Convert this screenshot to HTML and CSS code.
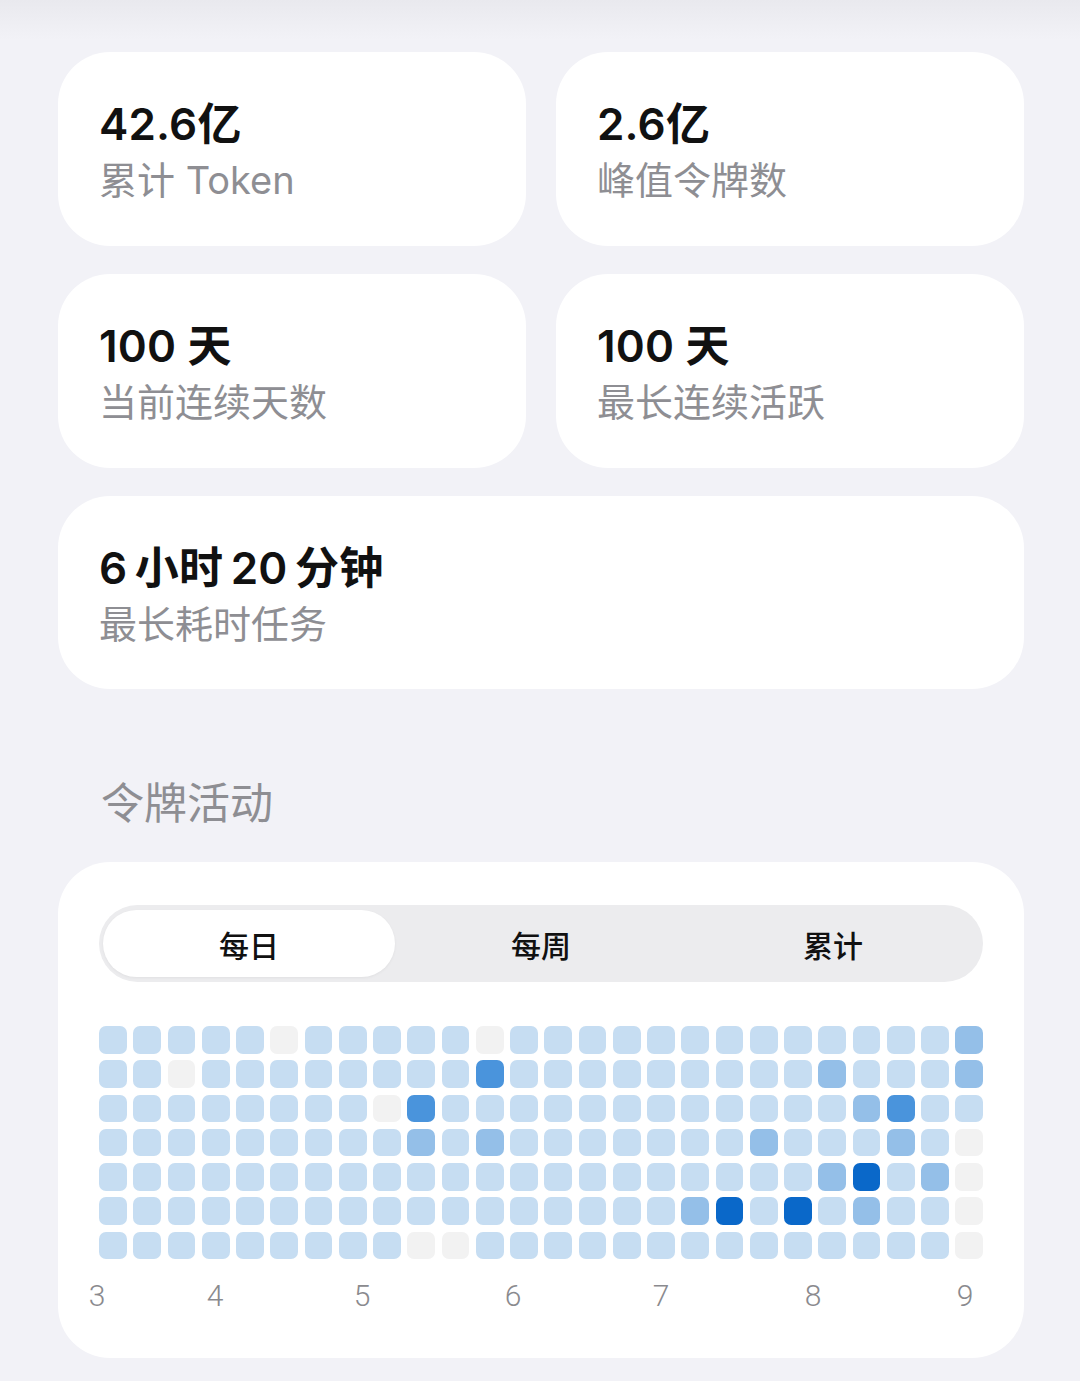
FILE: index.html
```html
<!DOCTYPE html>
<html lang="zh-CN">
<head>
<meta charset="utf-8">
<title>令牌统计</title>
<link rel="stylesheet" href="styles.css">
</head>
<body>
<div class="page">
  <div class="stats">
    <div class="card"><div class="value">42.6亿</div><div class="label">累计 Token</div></div>
    <div class="card"><div class="value">2.6亿</div><div class="label">峰值令牌数</div></div>
    <div class="card"><div class="value">100 天</div><div class="label">当前连续天数</div></div>
    <div class="card"><div class="value">100 天</div><div class="label">最长连续活跃</div></div>
    <div class="card wide"><div class="value">6&#8201;小时&#8201;20&#8201;分钟</div><div class="label">最长耗时任务</div></div>
  </div>

  <h2 class="section-title">令牌活动</h2>

  <div class="activity">
    <div class="segmented">
      <div class="seg active">每日</div>
      <div class="seg">每周</div>
      <div class="seg">累计</div>
    </div>

    <div class="heatmap">
      <span class="c"></span><span class="c"></span><span class="c"></span><span class="c"></span><span class="c"></span><span class="e"></span><span class="c"></span><span class="c"></span><span class="c"></span><span class="c"></span><span class="c"></span><span class="e"></span><span class="c"></span><span class="c"></span><span class="c"></span><span class="c"></span><span class="c"></span><span class="c"></span><span class="c"></span><span class="c"></span><span class="c"></span><span class="c"></span><span class="c"></span><span class="c"></span><span class="c"></span><span class="m"></span>
      <span class="c"></span><span class="c"></span><span class="e"></span><span class="c"></span><span class="c"></span><span class="c"></span><span class="c"></span><span class="c"></span><span class="c"></span><span class="c"></span><span class="c"></span><span class="d"></span><span class="c"></span><span class="c"></span><span class="c"></span><span class="c"></span><span class="c"></span><span class="c"></span><span class="c"></span><span class="c"></span><span class="c"></span><span class="m"></span><span class="c"></span><span class="c"></span><span class="c"></span><span class="m"></span>
      <span class="c"></span><span class="c"></span><span class="c"></span><span class="c"></span><span class="c"></span><span class="c"></span><span class="c"></span><span class="c"></span><span class="e"></span><span class="d"></span><span class="c"></span><span class="c"></span><span class="c"></span><span class="c"></span><span class="c"></span><span class="c"></span><span class="c"></span><span class="c"></span><span class="c"></span><span class="c"></span><span class="c"></span><span class="c"></span><span class="m"></span><span class="d"></span><span class="c"></span><span class="c"></span>
      <span class="c"></span><span class="c"></span><span class="c"></span><span class="c"></span><span class="c"></span><span class="c"></span><span class="c"></span><span class="c"></span><span class="c"></span><span class="m"></span><span class="c"></span><span class="m"></span><span class="c"></span><span class="c"></span><span class="c"></span><span class="c"></span><span class="c"></span><span class="c"></span><span class="c"></span><span class="m"></span><span class="c"></span><span class="c"></span><span class="c"></span><span class="m"></span><span class="c"></span><span class="e"></span>
      <span class="c"></span><span class="c"></span><span class="c"></span><span class="c"></span><span class="c"></span><span class="c"></span><span class="c"></span><span class="c"></span><span class="c"></span><span class="c"></span><span class="c"></span><span class="c"></span><span class="c"></span><span class="c"></span><span class="c"></span><span class="c"></span><span class="c"></span><span class="c"></span><span class="c"></span><span class="c"></span><span class="c"></span><span class="m"></span><span class="x"></span><span class="c"></span><span class="m"></span><span class="e"></span>
      <span class="c"></span><span class="c"></span><span class="c"></span><span class="c"></span><span class="c"></span><span class="c"></span><span class="c"></span><span class="c"></span><span class="c"></span><span class="c"></span><span class="c"></span><span class="c"></span><span class="c"></span><span class="c"></span><span class="c"></span><span class="c"></span><span class="c"></span><span class="m"></span><span class="x"></span><span class="c"></span><span class="x"></span><span class="c"></span><span class="m"></span><span class="c"></span><span class="c"></span><span class="e"></span>
      <span class="c"></span><span class="c"></span><span class="c"></span><span class="c"></span><span class="c"></span><span class="c"></span><span class="c"></span><span class="c"></span><span class="c"></span><span class="e"></span><span class="e"></span><span class="c"></span><span class="c"></span><span class="c"></span><span class="c"></span><span class="c"></span><span class="c"></span><span class="c"></span><span class="c"></span><span class="c"></span><span class="c"></span><span class="c"></span><span class="c"></span><span class="c"></span><span class="c"></span><span class="e"></span>
    </div>

    <div class="axis">
      <span class="tick" style="left:-20px">3</span>
      <span class="tick" style="left:98px">4</span>
      <span class="tick" style="left:245px">5</span>
      <span class="tick" style="left:396px">6</span>
      <span class="tick" style="left:544px">7</span>
      <span class="tick" style="left:696px">8</span>
      <span class="tick" style="left:848px">9</span>
    </div>
  </div>
</div>
</body>
</html>
```

FILE: styles.css
```css
* { box-sizing: border-box; }

html, body {
  margin: 0;
  padding: 0;
}

body {
  background: #f2f2f7;
  font-family: "Inter", "Noto Sans CJK SC", sans-serif;
  color: #111;
  width: 1080px;
  min-height: 1381px;
  overflow: hidden;
}

.page {
  padding: 52px 56px 0 58px;
  background: linear-gradient(#e9e9ee 0px, #f2f2f7 40px);
}

.stats {
  display: grid;
  grid-template-columns: 468px 468px;
  column-gap: 30px;
  row-gap: 28px;
}

.card {
  background: #fff;
  border-radius: 52px;
  height: 194px;
  padding: 44px 41px 0;
}

.card.wide {
  grid-column: 1 / 3;
  height: 193px;
}

.value {
  font-size: 44px;
  font-weight: 600;
  line-height: 56px;
  letter-spacing: 0.2px;
  color: #111;
}

.label {
  font-size: 38px;
  font-weight: 400;
  line-height: 56px;
  color: #8e8e93;
}

.section-title {
  margin: 86px 0 0 43px;
  font-size: 43px;
  font-weight: 400;
  line-height: 56px;
  color: #8e8e93;
}

.activity {
  margin-top: 31px;
  width: 966px;
  background: #fff;
  border-radius: 52px;
  padding: 43px 41px 0;
  height: 496px;
}

.segmented {
  display: grid;
  grid-template-columns: repeat(3, 1fr);
  height: 77px;
  background: #ececee;
  border-radius: 39px;
  padding: 5px 4px;
}

.seg {
  display: flex;
  align-items: center;
  justify-content: center;
  font-size: 30px;
  font-weight: 500;
  color: #111;
  border-radius: 34px;
}

.seg.active {
  background: #fff;
  box-shadow: 0 1px 3px rgba(0,0,0,0.05);
}

.heatmap {
  margin-top: 44px;
  width: 884px;
  display: grid;
  grid-template-columns: repeat(26, 1fr);
  grid-auto-rows: 27.5px;
  column-gap: 6.5px;
  row-gap: 6.8px;
}

.heatmap span {
  border-radius: 7px;
  background: #c6ddf2;
}

.heatmap .e { background: #f2f2f2; }
.heatmap .m { background: #94bfe8; }
.heatmap .d { background: #4a94dc; }
.heatmap .x { background: #0a68c9; }

.axis {
  position: relative;
  height: 40px;
  margin-top: 17px;
}

.tick {
  position: absolute;
  top: 0;
  width: 36px;
  text-align: center;
  font-family: "Roboto", "Liberation Sans", sans-serif;
  font-size: 30px;
  font-weight: 300;
  line-height: 40px;
  color: #8a8a8e;
}
```
